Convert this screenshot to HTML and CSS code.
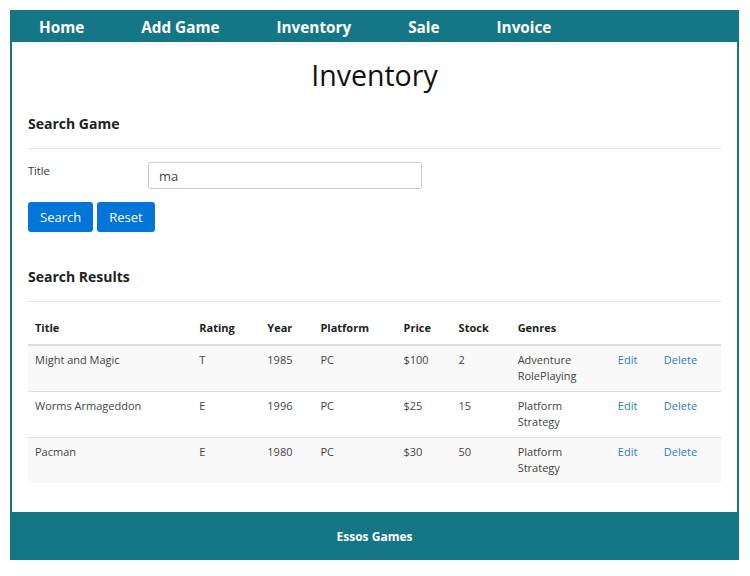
FILE: index.html
```html
<!DOCTYPE html>
<html lang="en">
<head>
<meta charset="utf-8">
<title>Inventory</title>
<link rel="stylesheet" href="styles.css">
</head>
<body>
<div class="page">
  <nav class="nav">
    <a class="nav-link" href="#">Home</a>
    <a class="nav-link" href="#">Add Game</a>
    <a class="nav-link" href="#">Inventory</a>
    <a class="nav-link" href="#">Sale</a>
    <a class="nav-link" href="#">Invoice</a>
  </nav>
  <main class="content">
    <h1 class="page-title">Inventory</h1>
    <h2 class="section-title">Search Game</h2>
    <hr class="rule">
    <form class="search-form">
      <div class="form-row">
        <label class="form-label" for="title">Title</label>
        <input class="form-input" id="title" type="text" value="ma">
      </div>
      <div class="form-actions">
        <button class="btn" type="button">Search</button>
        <button class="btn" type="button">Reset</button>
      </div>
    </form>
    <h2 class="section-title results-title">Search Results</h2>
    <hr class="rule">
    <table class="results">
      <colgroup>
        <col class="c-title"><col class="c-rating"><col class="c-year"><col class="c-platform"><col class="c-price"><col class="c-stock"><col class="c-genres"><col class="c-edit"><col class="c-delete">
      </colgroup>
      <thead>
        <tr><th>Title</th><th>Rating</th><th>Year</th><th>Platform</th><th>Price</th><th>Stock</th><th>Genres</th><th></th><th></th></tr>
      </thead>
      <tbody>
        <tr><td>Might and Magic</td><td>T</td><td>1985</td><td>PC</td><td>$100</td><td>2</td><td>Adventure<br>RolePlaying</td><td><a class="link" href="#">Edit</a></td><td><a class="link" href="#">Delete</a></td></tr>
        <tr><td>Worms Armageddon</td><td>E</td><td>1996</td><td>PC</td><td>$25</td><td>15</td><td>Platform<br>Strategy</td><td><a class="link" href="#">Edit</a></td><td><a class="link" href="#">Delete</a></td></tr>
        <tr><td>Pacman</td><td>E</td><td>1980</td><td>PC</td><td>$30</td><td>50</td><td>Platform<br>Strategy</td><td><a class="link" href="#">Edit</a></td><td><a class="link" href="#">Delete</a></td></tr>
      </tbody>
    </table>
  </main>
  <footer class="footer">Essos Games</footer>
</div>
</body>
</html>
```
FILE: styles.css
```css
* { box-sizing: border-box; }
html, body { margin: 0; padding: 0; background: #fff; }
body {
  font-family: "Open Sans", "Noto Sans", sans-serif;
  color: #333;
  font-size: 12px;
}
.page {
  margin: 10px 11px 0 10px;
  border: 2px solid #157786;
  border-bottom: 0;
  display: flex;
  flex-direction: column;
}
.nav {
  background: #157786;
  margin: -2px -2px 0 -2px;
  height: 32px;
  display: flex;
  align-items: center;
  padding: 2px 0 0 29px;
}
.nav-link {
  color: #fff;
  text-decoration: none;
  font-weight: 700;
  font-size: 15.3px;
  margin-right: 57px;
}
.content {
  padding: 0 16px 29px 16px;
}
.page-title {
  margin: 13px 0 0 0;
  font-size: 28.5px;
  font-weight: 400;
  line-height: 40px;
  text-align: center;
  color: #111;
}
.section-title {
  margin: 18px 0 0 0;
  font-size: 14px;
  line-height: 22px;
  font-weight: 700;
  color: #222;
}
.results-title { margin-top: 34px; }
.rule {
  border: 0;
  border-top: 1px solid #e6e6e6;
  margin: 13px 0 0 0;
}
.search-form { margin-top: 13px; }
.form-row {
  display: flex;
  align-items: flex-start;
}
.form-label {
  width: 120px;
  font-size: 11px;
  line-height: 16px;
  margin-top: 1px;
}
.form-input {
  width: 274px;
  height: 27px;
  border: 1px solid #ccc;
  border-radius: 3px;
  padding: 0 10px;
  font-family: inherit;
  font-size: 13px;
  color: #444;
}
.form-actions {
  display: flex;
  gap: 4px;
  margin-top: 13px;
}
.btn {
  background: #0275d8;
  color: #fff;
  border: 0;
  border-radius: 3px;
  height: 30px;
  padding: 0 12px;
  font-family: inherit;
  font-size: 13px;
}
.results {
  width: 100%;
  margin-top: 10px;
  border-collapse: collapse;
  table-layout: fixed;
  font-size: 11px;
}
.c-title { width: 164px; }
.c-rating { width: 68px; }
.c-year { width: 53px; }
.c-platform { width: 83px; }
.c-price { width: 55px; }
.c-stock { width: 59px; }
.c-genres { width: 100px; }
.c-edit { width: 46px; }
.c-delete { width: 64px; }
.results th {
  text-align: left;
  font-weight: 700;
  color: #222;
  padding: 8px 7px;
  line-height: 16px;
  border-bottom: 2px solid #ddd;
}
.results td {
  padding: 6px 7px 7px 7px;
  line-height: 16px;
  vertical-align: top;
  border-top: 1px solid #ddd;
  color: #444;
}
.results tbody tr:nth-child(odd) { background: #f9f9f9; }
.results tbody tr:first-child td { border-top: 0; }
.link { color: #2a7bd0; text-decoration: none; }
.footer {
  background: #157786;
  color: #fff;
  font-weight: 700;
  font-size: 12px;
  height: 48px;
  display: flex;
  align-items: center;
  justify-content: center;
  margin: 0 -2px;
}
```
